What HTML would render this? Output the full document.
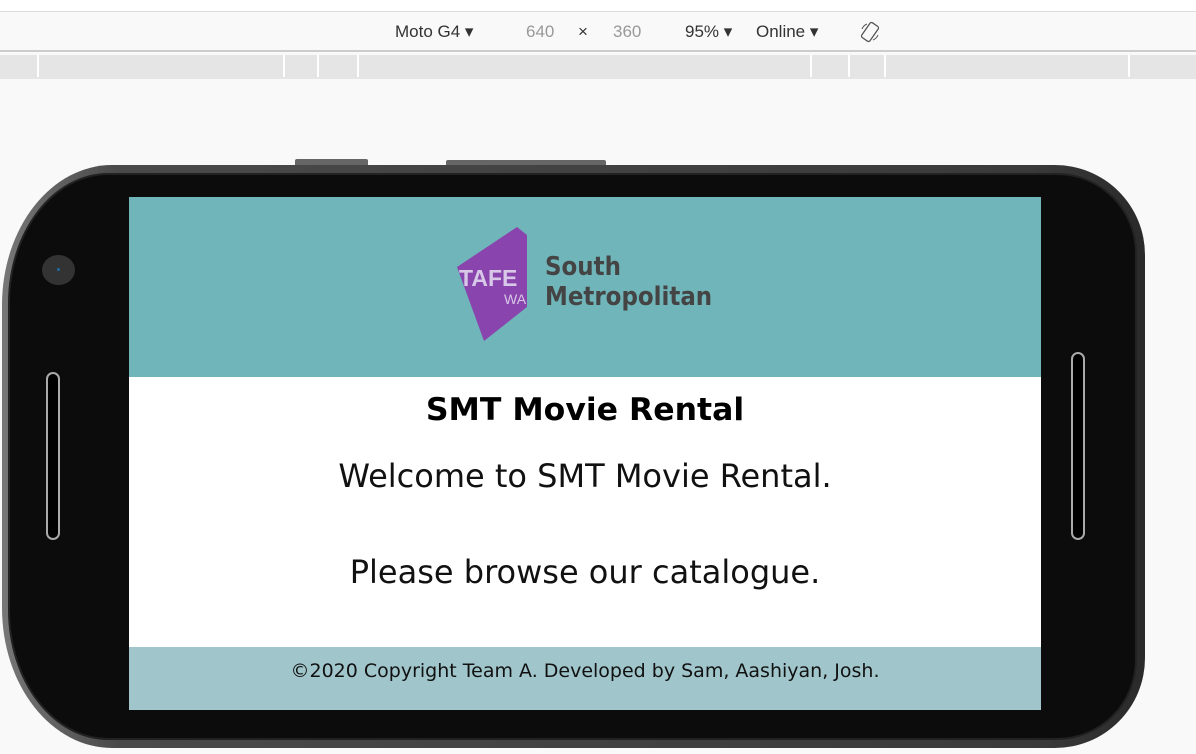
<!DOCTYPE html>
<html><head><meta charset="utf-8"><style>
*{margin:0;padding:0;box-sizing:border-box}
body{width:1196px;height:754px;background:#f9f9f9;position:relative;overflow:hidden;font-family:"DejaVu Sans","Liberation Sans",sans-serif}
.top{position:absolute;left:0;top:0;width:1196px;height:12px;background:#fff;border-bottom:1px solid #ddd}
.bar{position:absolute;left:0;top:12px;width:1196px;height:40px;background:#f9f9f9;border-bottom:2px solid #ccc;font-family:"Liberation Sans",sans-serif;font-size:17px;color:#333}
.bar span{position:absolute;top:10px}
.ruler{position:absolute;left:0;top:55px;width:1196px;height:24px;background:#e5e5e5}
.ruler i{position:absolute;top:0;width:2px;height:22px;background:#fff}
.phone{position:absolute;left:2px;top:165px;width:1143px;height:583px;border-radius:110px 90px 90px 110px/140px 90px 90px 140px;background:linear-gradient(90deg,#777,#4a4a4a 10%,#3a3a3a 90%,#2a2a2a);}
.inner{position:absolute;left:6px;top:8px;right:8px;bottom:8px;border-radius:100px 80px 80px 100px/130px 80px 80px 130px;background:#0c0c0c;border:2px solid #222}
.btn{position:absolute;height:6px;background:#666;border-radius:2px 2px 0 0}
.screen{position:absolute;left:129px;top:197px;width:912px;height:513px;background:#fff}
.head{height:180px;background:#6fb5b9;position:relative}
.slot{position:absolute;width:14px;border:2px solid #aaa;border-radius:7px;background:#000}
h1{text-align:center;font-size:31.5px;font-weight:bold;margin-top:15px;color:#000}
p{text-align:center;font-size:32px;color:#111}
.foot{position:absolute;left:0;bottom:0;width:912px;height:63px;background:#a0c6cc;text-align:center;font-size:19px;line-height:48px;color:#111}
</style></head><body>
<div class="top"></div>
<div class="bar">
<span style="left:395px">Moto G4 ▾</span>
<span style="left:526px;color:#999">640</span>
<span style="left:578px">×</span>
<span style="left:613px;color:#999">360</span>
<span style="left:685px">95% ▾</span>
<span style="left:756px">Online ▾</span>
<svg style="position:absolute;left:859px;top:9px" width="22" height="22" viewBox="0 0 22 22"><rect x="6" y="2" width="10" height="18" rx="2" transform="rotate(35 11 11)" fill="none" stroke="#555" stroke-width="1.3"/><path d="M3 8a9 9 0 0 1 5-5M19 14a9 9 0 0 1-5 5" fill="none" stroke="#555" stroke-width="1"/></svg>
</div>
<div class="ruler"><i style="left:37px"></i><i style="left:283px"></i><i style="left:317px"></i><i style="left:357px"></i><i style="left:810px"></i><i style="left:848px"></i><i style="left:884px"></i><i style="left:1128px"></i></div>
<div class="btn" style="left:295px;top:159px;width:73px"></div>
<div class="btn" style="left:446px;top:160px;width:160px"></div>
<div class="phone"><div class="inner"></div></div>
<div style="position:absolute;left:42px;top:255px;width:33px;height:30px;border-radius:50%;background:#333"><div style="position:absolute;left:15px;top:13px;width:3px;height:3px;border-radius:50%;background:#1a6fa8"></div></div>
<div class="slot" style="left:46px;top:372px;height:168px"></div>
<div class="slot" style="left:1071px;top:352px;height:188px"></div>
<div class="screen">
<div class="head">
<svg style="position:absolute;left:328px;top:30px" width="70" height="115" viewBox="0 0 70 115"><polygon points="60,0 70,8 70,80 27,114 0,40" fill="#8a44ad"/>
<text x="2" y="59" font-family="Liberation Sans,sans-serif" font-weight="bold" font-size="23" fill="#d8c8e8">TAFE</text>
<text x="47" y="77" font-family="Liberation Sans,sans-serif" font-size="14" fill="#d8c8e8">WA</text></svg>
<div style="position:absolute;left:416px;top:55px;font-family:'DejaVu Sans Condensed','DejaVu Sans',sans-serif;font-weight:bold;font-size:25.5px;line-height:30px;color:#444">South<br>Metropolitan</div>
</div>
<h1>SMT Movie Rental</h1>
<p style="margin-top:29px">Welcome to SMT Movie Rental.</p>
<p style="margin-top:58px">Please browse our catalogue.</p>
<div class="foot">©2020 Copyright Team A. Developed by Sam, Aashiyan, Josh.</div>
</div>
</body></html>
